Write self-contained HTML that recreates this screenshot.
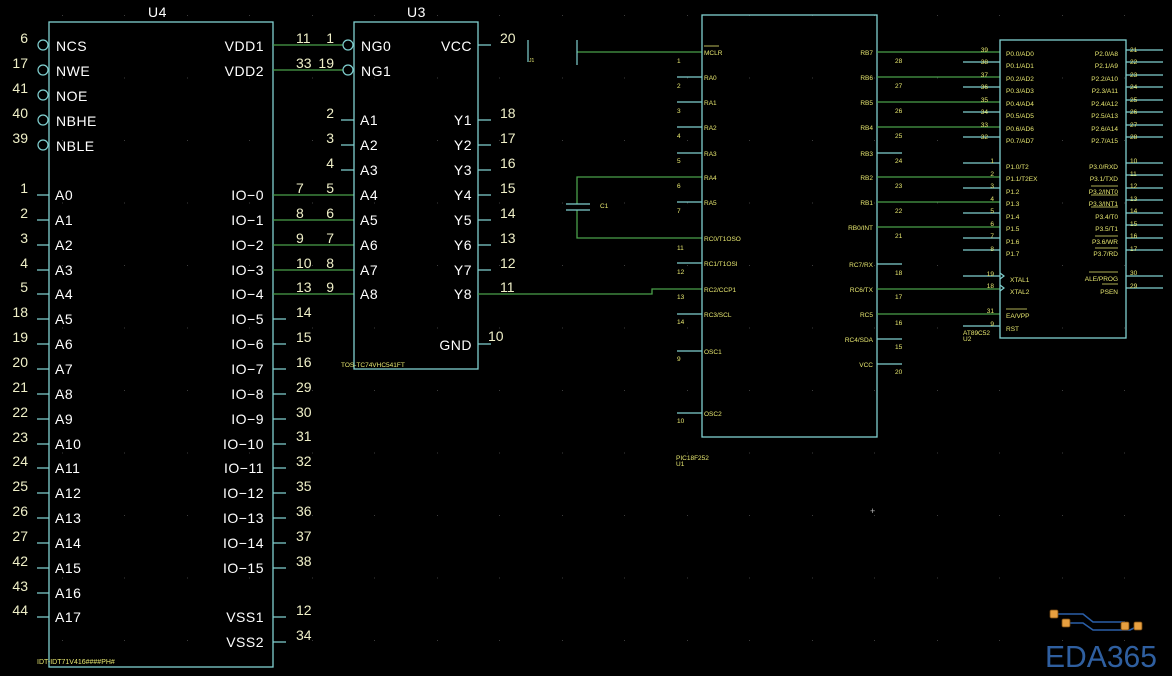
<!DOCTYPE html>
<html><head><meta charset="utf-8"><style>
html,body{margin:0;padding:0;background:#000;}
svg{display:block}
.b{fill:none;stroke:#80d0d0;stroke-width:1.3}
.p{stroke:#80d0d0;stroke-width:1.2}
.w{stroke:#4aa04a;stroke-width:1.3;fill:none}
.t{fill:#fff;font-family:"Liberation Sans",sans-serif;font-size:14px;letter-spacing:0.5px}
.n{fill:#f0f0c8;font-family:"Liberation Sans",sans-serif;font-size:14px}
.nr{text-anchor:end}
.s{fill:#e8e870;font-family:"Liberation Sans",sans-serif;font-size:6.5px}
.e{text-anchor:end}
</style></head><body>
<svg width="1172" height="676" viewBox="0 0 1172 676" xmlns="http://www.w3.org/2000/svg">
<defs><pattern id="g" x="0" y="0" width="62.5" height="62.5" patternUnits="userSpaceOnUse"><rect x="62" y="15" width="1" height="1" fill="#777"/></pattern></defs>
<rect width="1172" height="676" fill="url(#g)"/>

<!-- U4 -->
<text class="t" x="148" y="17">U4</text>
<rect class="b" x="49" y="22" width="224" height="645"/>
<g class="p">
<circle cx="43" cy="45" r="5" fill="none"/><circle cx="43" cy="70" r="5" fill="none"/><circle cx="43" cy="95" r="5" fill="none"/><circle cx="43" cy="120" r="5" fill="none"/><circle cx="43" cy="145" r="5" fill="none"/>
<path d="M37 195H49M37 220H49M37 245H49M37 270H49M37 294H49M37 319H49M37 344H49M37 369H49M37 394H49M37 419H49M37 444H49M37 468H49M37 493H49M37 518H49M37 543H49M37 568H49M37 593H49M37 617H49"/>
<path d="M273 319H286M273 344H286M273 369H286M273 394H286M273 419H286M273 444H286M273 468H286M273 493H286M273 518H286M273 543H286M273 568H286M273 617H286M273 642H286"/>
</g>
<g class="t">
<text x="56" y="51">NCS</text><text x="56" y="76">NWE</text><text x="56" y="101">NOE</text><text x="56" y="126">NBHE</text><text x="56" y="151">NBLE</text>
<text x="55" y="200">A0</text><text x="55" y="225">A1</text><text x="55" y="250">A2</text><text x="55" y="275">A3</text><text x="55" y="299">A4</text><text x="55" y="324">A5</text><text x="55" y="349">A6</text><text x="55" y="374">A7</text><text x="55" y="399">A8</text><text x="55" y="424">A9</text><text x="55" y="449">A10</text><text x="55" y="473">A11</text><text x="55" y="498">A12</text><text x="55" y="523">A13</text><text x="55" y="548">A14</text><text x="55" y="573">A15</text><text x="55" y="598">A16</text><text x="55" y="622">A17</text>
</g>
<g class="t" text-anchor="end">
<text x="264" y="51">VDD1</text><text x="264" y="76">VDD2</text>
<text x="264" y="200">IO−0</text><text x="264" y="225">IO−1</text><text x="264" y="250">IO−2</text><text x="264" y="275">IO−3</text><text x="264" y="299">IO−4</text><text x="264" y="324">IO−5</text><text x="264" y="349">IO−6</text><text x="264" y="374">IO−7</text><text x="264" y="399">IO−8</text><text x="264" y="424">IO−9</text><text x="264" y="449">IO−10</text><text x="264" y="473">IO−11</text><text x="264" y="498">IO−12</text><text x="264" y="523">IO−13</text><text x="264" y="548">IO−14</text><text x="264" y="573">IO−15</text><text x="264" y="622">VSS1</text><text x="264" y="647">VSS2</text>
</g>
<g class="n nr">
<text x="28" y="43">6</text><text x="28" y="68">17</text><text x="28" y="93">41</text><text x="28" y="118">40</text><text x="28" y="143">39</text>
<text x="28" y="193">1</text><text x="28" y="218">2</text><text x="28" y="243">3</text><text x="28" y="268">4</text><text x="28" y="292">5</text><text x="28" y="317">18</text><text x="28" y="342">19</text><text x="28" y="367">20</text><text x="28" y="392">21</text><text x="28" y="417">22</text><text x="28" y="442">23</text><text x="28" y="466">24</text><text x="28" y="491">25</text><text x="28" y="516">26</text><text x="28" y="541">27</text><text x="28" y="566">42</text><text x="28" y="591">43</text><text x="28" y="615">44</text>
</g>
<g class="n">
<text x="296" y="43">11</text><text x="296" y="68">33</text>
<text x="296" y="193">7</text><text x="296" y="218">8</text><text x="296" y="243">9</text><text x="296" y="268">10</text><text x="296" y="292">13</text><text x="296" y="317">14</text><text x="296" y="342">15</text><text x="296" y="367">16</text><text x="296" y="392">29</text><text x="296" y="417">30</text><text x="296" y="441">31</text><text x="296" y="466">32</text><text x="296" y="491">35</text><text x="296" y="516">36</text><text x="296" y="541">37</text><text x="296" y="566">38</text><text x="296" y="615">12</text><text x="296" y="640">34</text>
</g>
<text class="s" x="37" y="664" style="font-size:7px">IDT-IDT71V416####PH#</text>

<!-- wires U4-U3 -->
<path class="w" d="M273 45H343M273 70H343M273 195H354M273 220H354M273 245H354M273 270H354M273 294H354"/>

<!-- U3 -->
<text class="t" x="407" y="17">U3</text>
<rect class="b" x="354" y="22" width="124" height="347"/>
<g class="p">
<circle cx="348" cy="45" r="5" fill="none"/><circle cx="348" cy="70" r="5" fill="none"/>
<path d="M341 120H354M341 145H354M341 170H354"/>
<path d="M478 45H491M478 120H491M478 145H491M478 170H491M478 195H491M478 220H491M478 245H491M478 270H491M478 344H491"/>
</g>
<g class="t">
<text x="361" y="51">NG0</text><text x="361" y="76">NG1</text>
<text x="360" y="125">A1</text><text x="360" y="150">A2</text><text x="360" y="175">A3</text><text x="360" y="200">A4</text><text x="360" y="225">A5</text><text x="360" y="250">A6</text><text x="360" y="275">A7</text><text x="360" y="299">A8</text>
</g>
<g class="t" text-anchor="end">
<text x="472" y="51">VCC</text>
<text x="472" y="125">Y1</text><text x="472" y="150">Y2</text><text x="472" y="175">Y3</text><text x="472" y="200">Y4</text><text x="472" y="225">Y5</text><text x="472" y="250">Y6</text><text x="472" y="275">Y7</text><text x="472" y="299">Y8</text><text x="472" y="350">GND</text>
</g>
<g class="n nr">
<text x="334" y="43">1</text><text x="334" y="68">19</text><text x="334" y="118">2</text><text x="334" y="143">3</text><text x="334" y="168">4</text><text x="334" y="193">5</text><text x="334" y="218">6</text><text x="334" y="243">7</text><text x="334" y="268">8</text><text x="334" y="292">9</text>
</g>
<g class="n">
<text x="500" y="43">20</text><text x="500" y="118">18</text><text x="500" y="143">17</text><text x="500" y="168">16</text><text x="500" y="193">15</text><text x="500" y="218">14</text><text x="500" y="243">13</text><text x="500" y="268">12</text><text x="500" y="292">11</text><text x="488" y="341">10</text>
</g>
<text class="s" x="341" y="367">TOS-TC74VHC541FT</text>

<!-- wires to PIC -->
<path class="w" d="M478 294H652V289H702"/>
<path class="w" d="M577 52H702"/>
<path class="p" d="M577 40V65M528 40V62"/>
<text class="s" x="529" y="62" style="font-size:5px">J1</text>
<path class="w" d="M702 177H577V204M577 210V238H702"/>
<path class="p" d="M566 204H590M566 210H590"/>
<text class="s" x="600" y="208">C1</text>

<!-- PIC -->
<rect class="b" x="702" y="15" width="175" height="422"/>
<g class="p">
<path d="M677 77H702M677 102H702M677 127H702M677 153H702M677 202H702M677 263H702M677 314H702M677 351H702M677 413H702"/>
<path d="M877 153H902M877 264H902M877 339H902M877 364H902"/>
</g>
<path d="M704 46H719" stroke="#e8e870" stroke-width="0.8"/>
<g class="s">
<text x="704" y="55">MCLR</text><text x="704" y="80">RA0</text><text x="704" y="105">RA1</text><text x="704" y="130">RA2</text><text x="704" y="156">RA3</text><text x="704" y="180">RA4</text><text x="704" y="205">RA5</text><text x="704" y="241">RC0/T1OSO</text><text x="704" y="266">RC1/T1OSI</text><text x="704" y="292">RC2/CCP1</text><text x="704" y="317">RC3/SCL</text><text x="704" y="354">OSC1</text><text x="704" y="416">OSC2</text>
<text x="677" y="63">1</text><text x="677" y="88">2</text><text x="677" y="113">3</text><text x="677" y="138">4</text><text x="677" y="163">5</text><text x="677" y="188">6</text><text x="677" y="213">7</text><text x="677" y="250">11</text><text x="677" y="274">12</text><text x="677" y="299">13</text><text x="677" y="324">14</text><text x="677" y="361">9</text><text x="677" y="423">10</text>
<text x="895" y="63">28</text><text x="895" y="88">27</text><text x="895" y="113">26</text><text x="895" y="138">25</text><text x="895" y="163">24</text><text x="895" y="188">23</text><text x="895" y="213">22</text><text x="895" y="238">21</text><text x="895" y="275">18</text><text x="895" y="299">17</text><text x="895" y="325">16</text><text x="895" y="349">15</text><text x="895" y="374">20</text>
<text x="676" y="460">PIC18F252</text><text x="676" y="466">U1</text>
</g>
<g class="s e">
<text x="873" y="55">RB7</text><text x="873" y="80">RB6</text><text x="873" y="105">RB5</text><text x="873" y="130">RB4</text><text x="873" y="156">RB3</text><text x="873" y="180">RB2</text><text x="873" y="205">RB1</text><text x="873" y="230">RB0/INT</text><text x="873" y="267">RC7/RX</text><text x="873" y="292">RC6/TX</text><text x="873" y="317">RC5</text><text x="873" y="342">RC4/SDA</text><text x="873" y="367">VCC</text>
</g>

<!-- PIC to AT89 wires -->
<path class="w" d="M877 52H1000M877 77H1000M877 102H1000M877 127H1000M877 177H1000M877 202H1000M877 227H1000M877 289H1000M877 314H1000"/>

<!-- AT89C52 -->
<rect class="b" x="1000" y="40" width="126" height="298"/>
<g class="p">
<path d="M963 62H1000M963 87H1000M963 112H1000M963 137H1000M963 163H1000M963 188H1000M963 213H1000M963 238H1000M963 250H1000M963 276H1000M963 326H1000"/>
<path d="M1126 50H1163M1126 62H1163M1126 75H1163M1126 87H1163M1126 100H1163M1126 112H1163M1126 125H1163M1126 137H1163M1126 163H1163M1126 175H1163M1126 188H1163M1126 200H1163M1126 213H1163M1126 225H1163M1126 238H1163M1126 250H1163M1126 276H1163M1126 288H1163"/>
<path d="M1000 273L1004 276L1000 279M1000 285L1004 288L1000 291" fill="none"/>
</g>
<g stroke="#e8e870" stroke-width="0.7">
<path d="M1091 186H1118M1091 195H1118M1091 207H1118M1095 236H1118M1095 248H1118M1089 272H1118M1102 284H1118M1006 309H1027"/>
</g>
<g class="s">
<text x="1006" y="56">P0.0/AD0</text><text x="1006" y="68">P0.1/AD1</text><text x="1006" y="81">P0.2/AD2</text><text x="1006" y="93">P0.3/AD3</text><text x="1006" y="106">P0.4/AD4</text><text x="1006" y="118">P0.5/AD5</text><text x="1006" y="131">P0.6/AD6</text><text x="1006" y="143">P0.7/AD7</text>
<text x="1006" y="169">P1.0/T2</text><text x="1006" y="181">P1.1/T2EX</text><text x="1006" y="194">P1.2</text><text x="1006" y="206">P1.3</text><text x="1006" y="219">P1.4</text><text x="1006" y="231">P1.5</text><text x="1006" y="244">P1.6</text><text x="1006" y="256">P1.7</text>
<text x="1010" y="282">XTAL1</text><text x="1010" y="294">XTAL2</text><text x="1006" y="318">EA/VPP</text><text x="1006" y="331">RST</text>
<text x="963" y="335">AT89C52</text><text x="963" y="341">U2</text>
<text x="988" y="52" class="e">39</text><text x="988" y="64" class="e">38</text><text x="988" y="77" class="e">37</text><text x="988" y="89" class="e">36</text><text x="988" y="102" class="e">35</text><text x="988" y="114" class="e">34</text><text x="988" y="127" class="e">33</text><text x="988" y="139" class="e">32</text>
<text x="994" y="163" class="e">1</text><text x="994" y="176" class="e">2</text><text x="994" y="188" class="e">3</text><text x="994" y="201" class="e">4</text><text x="994" y="213" class="e">5</text><text x="994" y="226" class="e">6</text><text x="994" y="238" class="e">7</text><text x="994" y="251" class="e">8</text>
<text x="994" y="276" class="e">19</text><text x="994" y="288" class="e">18</text><text x="994" y="313" class="e">31</text><text x="994" y="326" class="e">9</text>
<text x="1130" y="52">21</text><text x="1130" y="64">22</text><text x="1130" y="77">23</text><text x="1130" y="89">24</text><text x="1130" y="102">25</text><text x="1130" y="114">26</text><text x="1130" y="127">27</text><text x="1130" y="139">28</text>
<text x="1130" y="163">10</text><text x="1130" y="176">11</text><text x="1130" y="188">12</text><text x="1130" y="201">13</text><text x="1130" y="213">14</text><text x="1130" y="226">15</text><text x="1130" y="238">16</text><text x="1130" y="251">17</text><text x="1130" y="275">30</text><text x="1130" y="288">29</text>
</g>
<g class="s e">
<text x="1118" y="56">P2.0/A8</text><text x="1118" y="68">P2.1/A9</text><text x="1118" y="81">P2.2/A10</text><text x="1118" y="93">P2.3/A11</text><text x="1118" y="106">P2.4/A12</text><text x="1118" y="118">P2.5/A13</text><text x="1118" y="131">P2.6/A14</text><text x="1118" y="143">P2.7/A15</text>
<text x="1118" y="169">P3.0/RXD</text><text x="1118" y="181">P3.1/TXD</text><text x="1118" y="194">P3.2/INT0</text><text x="1118" y="206">P3.3/INT1</text><text x="1118" y="219">P3.4/T0</text><text x="1118" y="231">P3.5/T1</text><text x="1118" y="244">P3.6/WR</text><text x="1118" y="256">P3.7/RD</text>
<text x="1118" y="281">ALE/PROG</text><text x="1118" y="294">PSEN</text>
</g>
<text x="870" y="514" fill="#bbb" font-size="9" font-family="Liberation Sans">+</text>

<!-- EDA365 logo -->
<g fill="none" stroke="#2a5fa8" stroke-width="1.6">
<path d="M1055 614H1083L1093 622H1125"/>
<path d="M1065 623H1083L1093 630H1130L1138 626"/>
</g>
<g fill="#e8a040" stroke="#7a4a10" stroke-width="0.8">
<rect x="1050" y="610" width="8" height="8" rx="1.5"/><rect x="1062" y="619" width="8" height="8" rx="1.5"/><rect x="1121" y="622" width="8" height="8" rx="1.5"/><rect x="1134" y="622" width="8" height="8" rx="1.5"/>
</g>
<text x="1045" y="667" fill="#2f5fa0" font-family="Liberation Sans" font-size="31" textLength="112" lengthAdjust="spacingAndGlyphs">EDA365</text>
</svg>
</body></html>
